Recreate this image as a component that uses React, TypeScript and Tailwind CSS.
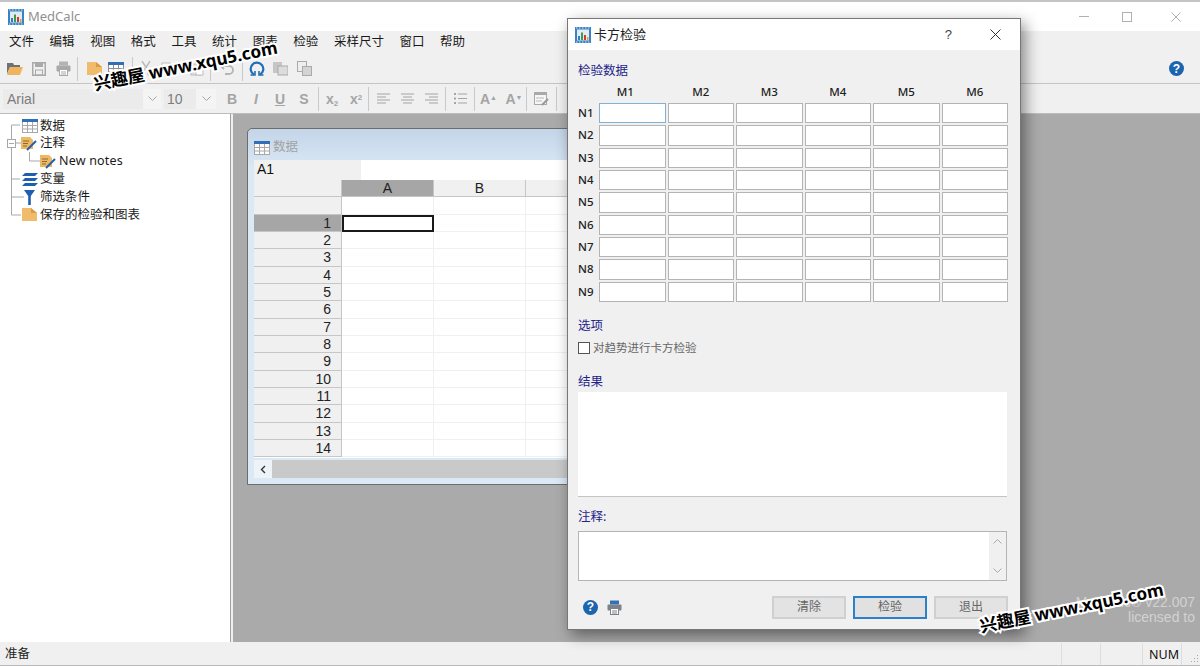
import React from "react";

const CJK = "font-['Liberation_Sans','Noto_Sans_CJK_SC',sans-serif]";
const UI = "font-['Noto_Sans','Noto_Sans_CJK_SC',sans-serif]";

function AppIcon({ size = 16 }: { size?: number }) {
  return (
    <svg width={size} height={size} viewBox="0 0 16 16" className="shrink-0">
      <rect x="0" y="0" width="16" height="16" fill="#3b82c4" />
      <path d="M1 1H15M1 15H15" stroke="#cfe2f3" strokeDasharray="1.5 1.5" />
      <rect x="2" y="2.5" width="12" height="11" fill="#dfeaf5" />
      <rect x="3" y="9" width="2" height="4" fill="#2b7fc9" />
      <rect x="6" y="5.5" width="2" height="7.5" fill="#3f9a45" />
      <rect x="9" y="8" width="2" height="5" fill="#d23a2c" />
      <rect x="12" y="10" width="1.5" height="3" fill="#e0a030" />
    </svg>
  );
}

function TableIcon({ muted = false, w = 16, h = 14 }: { muted?: boolean; w?: number; h?: number }) {
  const s = muted ? "#a8a8a8" : "#8d8d8d";
  return (
    <svg width={w} height={h} viewBox="0 0 16 14" className="shrink-0">
      <rect x="0.5" y="0.5" width="15" height="13" fill="#fff" stroke={s} />
      <rect x="0" y="0" width="16" height="3" fill="#2f6fb5" />
      <path d="M0 6.5H16M0 10H16M5.5 3V14M10.5 3V14" stroke={s} strokeWidth="1" />
    </svg>
  );
}

function NoteIcon() {
  return (
    <svg width="17" height="15" viewBox="0 0 17 15" className="shrink-0">
      <path d="M0 1H9L12 4V13H0Z" fill="#eeb762" />
      <path d="M2 5H8M2 7.5H7M2 10H6" stroke="#8a6a3a" strokeWidth="1" />
      <path d="M6 14L15 5" stroke="#1f5fae" strokeWidth="2" />
    </svg>
  );
}

function FolderDoc({ w = 15, h = 15 }: { w?: number; h?: number }) {
  return (
    <svg width={w} height={h} viewBox="0 0 15 15" className="shrink-0">
      <path d="M0 1H9L15 6V14H0Z" fill="#f0bb6a" />
      <path d="M9 1V6H15Z" fill="#d99c45" />
    </svg>
  );
}

function HelpIcon({ size = 15 }: { size?: number }) {
  return (
    <span
      style={{ width: size, height: size }}
      className="flex shrink-0 items-center justify-center rounded-full bg-[#1c64ad] font-['Liberation_Sans',sans-serif] text-[12px] leading-none font-bold text-white"
    >
      ?
    </span>
  );
}

function PrinterIcon({ c = "#8a8f94", top = "#b3b3b3" }: { c?: string; top?: string }) {
  return (
    <svg width="15" height="15" viewBox="0 0 15 15" className="shrink-0">
      <rect x="3" y="0.5" width="9" height="4" fill={top} />
      <rect x="0.5" y="4.5" width="14" height="6" rx="1" fill={c} />
      <rect x="3.5" y="8.5" width="8" height="6" fill="#fff" stroke={c} />
      <path d="M5 11H10M5 13H10" stroke={c} />
    </svg>
  );
}

const Tb = ({ w, children }: { w: number; children?: React.ReactNode }) => (
  <div style={{ width: w }} className="flex h-full shrink-0 items-center justify-center">
    {children}
  </div>
);
const Sep = () => <div className="mx-0 h-[24px] w-px shrink-0 bg-[#c9c9c9]" />;

const G = "#a9a9a9";

function Toolbar1() {
  return (
    <div className="flex h-[30px] items-center border-b border-[#c4c4c4] bg-[#f0f0f0] pl-[3px]">
      <Tb w={24}>
        <svg width="16" height="13" viewBox="0 0 16 13">
          <path d="M0 1H6L7 3H13V5H3L0 12Z" fill="#6f7275" />
          <path d="M3 5H16L13 13H0Z" fill="#efb45d" />
        </svg>
      </Tb>
      <Tb w={24}>
        <svg width="14" height="14" viewBox="0 0 14 14">
          <rect x="0.75" y="0.75" width="12.5" height="12.5" fill="none" stroke={G} strokeWidth="1.5" />
          <rect x="3" y="1" width="8" height="4" fill={G} />
          <rect x="3.5" y="8" width="7" height="5" fill="none" stroke={G} />
        </svg>
      </Tb>
      <Tb w={24}>
        <PrinterIcon c="#a9a9a9" />
      </Tb>
      <Tb w={2} />
      <Sep />
      <Tb w={5} />
      <Tb w={22}>
        <FolderDoc />
      </Tb>
      <Tb w={22}>
        <TableIcon />
      </Tb>
      <Tb w={5} />
      <Sep />
      <Tb w={2} />
      <Tb w={22}>
        <svg width="12" height="15" viewBox="0 0 12 15" fill="none" stroke="#b9b9b9" strokeWidth="1.4">
          <path d="M2 0L9 11M10 0L3 11" />
          <circle cx="2.5" cy="12.5" r="1.7" />
          <circle cx="9.5" cy="12.5" r="1.7" />
        </svg>
      </Tb>
      <Tb w={22}>
        <svg width="14" height="14" viewBox="0 0 14 14" fill="#fff" stroke="#bdbdbd">
          <rect x="1" y="1" width="8" height="9" />
          <rect x="5" y="4" width="8" height="9" />
        </svg>
      </Tb>
      <Tb w={5} />
      <Tb w={26}>
        <svg width="14" height="14" viewBox="0 0 14 14" fill="#ddd" stroke="#bdbdbd">
          <rect x="1" y="2" width="10" height="11" />
          <rect x="6" y="6" width="7" height="7" fill="#fff" />
        </svg>
      </Tb>
      <Sep />
      <Tb w={31}>
        <svg width="15" height="12" viewBox="0 0 15 12" fill="none" stroke="#b5b5b5" strokeWidth="1.8">
          <path d="M2 3H10A3.5 3.5 0 0 1 10 11H6" />
          <path d="M5 0L2 3L5 6" />
        </svg>
      </Tb>
      <Sep />
      <Tb w={28}>
        <svg width="16" height="16" viewBox="0 0 16 16" fill="none" stroke="#1f6fb8" strokeWidth="2.2">
          <path d="M5 13.5A6.3 6.3 0 1 1 11 13.5" />
          <path d="M1.5 14H6V10M14.5 14H10V10" strokeWidth="1.6" />
        </svg>
      </Tb>
      <Tb w={19}>
        <svg width="15" height="15" viewBox="0 0 15 15">
          <rect x="0" y="1" width="9" height="11" fill="#c6c6c6" />
          <rect x="5" y="5" width="10" height="9" fill="#dcdcdc" stroke="#aaa" />
        </svg>
      </Tb>
      <Tb w={28}>
        <svg width="15" height="15" viewBox="0 0 15 15">
          <rect x="0.5" y="0.5" width="9" height="10" fill="#eee" stroke="#aaa" />
          <rect x="5.5" y="5.5" width="9" height="9" fill="#d4d4d4" stroke="#aaa" />
        </svg>
      </Tb>
      <div className="mr-[16px] ml-auto">
        <HelpIcon />
      </div>
    </div>
  );
}

const Fmt = ({ w = 24, children }: { w?: number; children: React.ReactNode }) => (
  <Tb w={w}>
    <span className="font-['Liberation_Sans',sans-serif] text-[14px] leading-none font-bold text-[#a4a4a4]">
      {children}
    </span>
  </Tb>
);

const Lines = ({ kind }: { kind: "l" | "c" | "r" }) => {
  const d =
    kind === "l"
      ? "M0 1H13M0 4H9M0 7H13M0 10H9"
      : kind === "c"
        ? "M0 1H13M2 4H11M0 7H13M2 10H11"
        : "M0 1H13M4 4H13M0 7H13M4 10H13";
  return (
    <svg width="13" height="11" viewBox="0 0 13 11" fill="none" stroke="#a4a4a4">
      <path d={d} />
    </svg>
  );
};

function Combo({ w, label, dw, pad }: { w: number; label: string; dw: number; pad: string }) {
  return (
    <div style={{ width: w }} className="flex h-[20px] shrink-0 bg-[#ebebeb]">
      <div className={`flex-1 font-['Liberation_Sans',sans-serif] text-[14px] leading-[20px] text-[#7d7d7d] ${pad}`}>
        {label}
      </div>
      <div style={{ width: dw }} className="flex items-center justify-center bg-[#f4f4f4]">
        <svg width="9" height="5" viewBox="0 0 9 5" fill="none" stroke="#a5a5a5">
          <path d="M0.5 0.5L4.5 4.5L8.5 0.5" />
        </svg>
      </div>
    </div>
  );
}

function Toolbar2() {
  return (
    <div className="flex h-[30px] items-center border-b border-[#bdbdbd] bg-[#f0f0f0] pl-[3px]">
      <Combo w={158} label="Arial" dw={18} pad="pl-[4px]" />
      <div className="w-[3px]" />
      <Combo w={52} label="10" dw={20} pad="pl-[3px]" />
      <Tb w={4} />
      <Fmt>B</Fmt>
      <Fmt>
        <i>I</i>
      </Fmt>
      <Fmt>
        <u>U</u>
      </Fmt>
      <Fmt>S</Fmt>
      <Tb w={2} />
      <Sep />
      <Tb w={1} />
      <Fmt>
        x<sub className="text-[8px]">2</sub>
      </Fmt>
      <Fmt>
        x<sup className="text-[8px]">2</sup>
      </Fmt>
      <Sep />
      <Tb w={2} />
      <Tb w={24}>
        <Lines kind="l" />
      </Tb>
      <Tb w={24}>
        <Lines kind="c" />
      </Tb>
      <Tb w={24}>
        <Lines kind="r" />
      </Tb>
      <Tb w={2} />
      <Sep />
      <Tb w={28}>
        <svg width="13" height="11" viewBox="0 0 13 11" fill="none" stroke="#a4a4a4">
          <path d="M4 1H13M4 5.5H13M4 10H13" />
          <path d="M0 1H2M0 5.5H2M0 10H2" strokeWidth="2" />
        </svg>
      </Tb>
      <Sep />
      <Fmt w={27}>
        A<sup className="text-[7px]">▲</sup>
      </Fmt>
      <Fmt w={24}>
        A<sup className="text-[7px]">▼</sup>
      </Fmt>
      <Sep />
      <Tb w={29}>
        <svg width="15" height="14" viewBox="0 0 15 14">
          <rect x="0.5" y="0.5" width="12" height="12" fill="#f6f6f6" stroke="#a9a9a9" />
          <rect x="0" y="0" width="13" height="3" fill="#a9a9a9" />
          <path d="M2 6H10M2 9H8" stroke="#bbb" />
          <path d="M8 13L14 7" stroke="#999" strokeWidth="2" />
        </svg>
      </Tb>
      <Sep />
    </div>
  );
}

const TreeRow = ({ icon, text, indent = 21, latin = false }: { icon: React.ReactNode; text: string; indent?: number; latin?: boolean }) => (
  <div style={{ paddingLeft: indent }} className="relative flex h-[17.8px] items-center gap-[2px]">
    <div className="flex w-[17px] shrink-0 items-center justify-center">{icon}</div>
    <span className={`${UI} text-[12.5px] leading-none text-[#1a1a1a] ${latin ? "tracking-[0.2px]" : ""}`}>{text}</span>
  </div>
);

function Tree() {
  return (
    <div className="relative w-[231px] shrink-0 border-r border-[#a0a0a0] bg-white pt-[3px]">
      <svg width="40" height="110" className="absolute top-0 left-0" fill="none" stroke="#a8a8a8">
        <path d="M11.5 11V101M11.5 11H20M16 29H21M29.5 38V47H40M11.5 65H20M11.5 83H24M11.5 101H21" />
        <rect x="7.5" y="25.5" width="8" height="8" fill="#fff" />
        <path d="M9 29.5H14" />
      </svg>
      <TreeRow icon={<TableIcon muted />} text="数据" />
      <TreeRow icon={<NoteIcon />} text="注释" />
      <TreeRow indent={40} icon={<NoteIcon />} text="New notes" latin />
      <TreeRow
        icon={
          <svg width="16" height="13" viewBox="0 0 16 13" fill="#1f5fae">
            <path d="M3 0H16L13 3H0Z" />
            <path d="M3 5H16L13 8H0Z" />
            <path d="M3 10H16L13 13H0Z" />
          </svg>
        }
        text="变量"
      />
      <TreeRow
        icon={
          <svg width="11" height="15" viewBox="0 0 11 15">
            <path d="M0 0H11L6.8 6V15H4.2V6Z" fill="#1f5fae" />
          </svg>
        }
        text="筛选条件"
      />
      <TreeRow icon={<FolderDoc />} text="保存的检验和图表" />
    </div>
  );
}

const hCell = "border-r border-b border-[#c6c6c6] bg-[#f0f0f0]";

function DataWindow() {
  const rows = Array.from({ length: 14 }, (_, i) => i + 1);
  return (
    <div className="absolute top-[14px] left-[14px] flex h-[357px] w-[440px] flex-col rounded-t-[5px] border border-[#6d6d6d] bg-gradient-to-b from-[#c3d5e8] to-[#dbe8f5] to-[40px] px-[6px]">
      <div className="flex h-[31px] shrink-0 items-center gap-[3px] pt-[6px]">
        <TableIcon muted />
        <span className={`${UI} text-[12.5px] text-[#a2a2a2]`}>数据</span>
      </div>
      <div className="flex h-[20px] shrink-0 bg-white">
        <div className="w-[107px] bg-[#f0f0f0] pl-[3px] font-['Liberation_Sans',sans-serif] text-[14px] leading-[19px] text-[#111]">A1</div>
      </div>
      <div className="grid h-[278px] shrink-0 auto-rows-[17.33px] grid-cols-[88px_92px_92px_92px] overflow-hidden bg-white font-['Liberation_Sans',sans-serif] text-[14px] leading-[17px] text-[#222]">
        <div className={hCell} />
        <div className="border-r border-b border-[#c6c6c6] bg-[#a6a6a6] text-center">A</div>
        <div className={`${hCell} text-center`}>B</div>
        <div className={hCell} />
        <div className={hCell} />
        <div className="border-r border-b border-[#f0f0f0]" />
        <div className="border-r border-b border-[#f0f0f0]" />
        <div className="border-r border-b border-[#f0f0f0]" />
        {rows.map((r) => (
          <React.Fragment key={r}>
            <div className={`${r === 1 ? "border-r border-b border-[#c6c6c6] bg-[#a6a6a6]" : hCell} pr-[10px] text-right`}>{r}</div>
            <div className={r === 1 ? "border-2 border-[#1a1a1a]" : "border-r border-b border-[#f0f0f0]"} />
            <div className="border-r border-b border-[#f0f0f0]" />
            <div className="border-r border-b border-[#f0f0f0]" />
          </React.Fragment>
        ))}
      </div>
      <div className="mt-[2px] flex h-[18px] shrink-0">
        <div className="flex w-[18px] items-center justify-center bg-[#eef3f8]">
          <svg width="6" height="9" viewBox="0 0 6 9" fill="none" stroke="#333" strokeWidth="1.4">
            <path d="M5 1L1.5 4.5L5 8" />
          </svg>
        </div>
        <div className="flex-1 bg-[#c9c9c9]" />
      </div>
    </div>
  );
}

const Heading = ({ children, className = "" }: { children: React.ReactNode; className?: string }) => (
  <div className={`${UI} text-[12.5px] leading-[16px] text-[#23238a] ${className}`}>{children}</div>
);

const DlgBtn = ({ label, primary = false }: { label: string; primary?: boolean }) => (
  <div
    className={`flex h-[23px] w-[74px] items-center justify-center border-2 text-[12px] text-[#666] ${CJK} ${
      primary ? "border-[#2c7fc9] bg-[#e1e1e1]" : "border-[#d0d0d0] bg-[#e3e3e3]"
    }`}
  >
    {label}
  </div>
);

function Dialog() {
  const ms = ["M1", "M2", "M3", "M4", "M5", "M6"];
  const ns = ["N1", "N2", "N3", "N4", "N5", "N6", "N7", "N8", "N9"];
  return (
    <div className="absolute top-[18px] left-[567px] z-10 flex h-[612px] w-[454px] flex-col border border-[#777] bg-[#f0f0f0] shadow-[4px_5px_14px_rgba(0,0,0,0.45)]">
      <div className="flex h-[31px] shrink-0 items-center bg-white pl-[7px]">
        <AppIcon />
        <span className={`${UI} ml-[3px] text-[13px] text-[#222]`}>卡方检验</span>
        <span className="ml-auto font-['Liberation_Sans',sans-serif] text-[13px] text-[#444]">?</span>
        <svg width="11" height="11" viewBox="0 0 11 11" className="mr-[19px] ml-[38px]" fill="none" stroke="#333">
          <path d="M0.5 0.5L10.5 10.5M10.5 0.5L0.5 10.5" />
        </svg>
      </div>
      <div className="flex w-[450px] flex-1 flex-col pl-[10px]">
        <Heading className="mt-[13px]">检验数据</Heading>
        <div className="mt-[6px] grid grid-cols-[19px_repeat(6,66.5px)] grid-rows-[16px_repeat(9,20.33px)] gap-x-[2px] gap-y-[2px]">
          <div />
          {ms.map((m, i) => (
            <div key={m} className={`text-center font-['Noto_Sans',sans-serif] text-[11.5px] leading-[14px] font-medium text-[#222] ${i === 0 ? "pr-[14px]" : ""}`}>
              {m}
            </div>
          ))}
          {ns.map((n, r) => (
            <React.Fragment key={n}>
              <div className="font-['Noto_Sans',sans-serif] text-[11.5px] leading-[20px] font-medium text-[#222]">{n}</div>
              {ms.map((m, c) => (
                <div key={m} className={`border bg-white ${r === 0 && c === 0 ? "border-[#7fb2d6]" : "border-[#b4b4b4]"}`} />
              ))}
            </React.Fragment>
          ))}
        </div>
        <Heading className="mt-[16px]">选项</Heading>
        <div className="mt-[8px] flex h-[13px] items-center gap-[3px]">
          <div className="h-[12px] w-[12px] border border-[#555] bg-white" />
          <span className={`${CJK} text-[11.5px] text-[#666]`}>对趋势进行卡方检验</span>
        </div>
        <Heading className="mt-[19px]">结果</Heading>
        <div className="mt-[2px] h-[105px] w-[429px] border-b border-[#c4c4c4] bg-white" />
        <Heading className="mt-[12px]">注释:</Heading>
        <div className="mt-[6px] flex h-[50px] w-[429px] border border-[#b4b4b4] bg-white">
          <div className="flex-1" />
          <div className="flex w-[17px] flex-col items-center justify-between bg-[#f0f0f0] py-[7px]">
            <svg width="9" height="5" viewBox="0 0 9 5" fill="none" stroke="#aaa">
              <path d="M0.5 4.5L4.5 0.5L8.5 4.5" />
            </svg>
            <svg width="9" height="5" viewBox="0 0 9 5" fill="none" stroke="#aaa">
              <path d="M0.5 0.5L4.5 4.5L8.5 0.5" />
            </svg>
          </div>
        </div>
        <div className="mt-[15px] flex w-[430px] items-center">
          <div className="ml-[5px]">
            <HelpIcon />
          </div>
          <div className="ml-[9px]">
            <PrinterIcon c="#7b8289" top="#2f72b8" />
          </div>
          <div className="ml-auto flex gap-[7px]">
            <DlgBtn label="清除" />
            <DlgBtn label="检验" primary />
            <DlgBtn label="退出" />
          </div>
        </div>
      </div>
    </div>
  );
}

const Watermark = ({ className }: { className: string }) => (
  <div
    className={`absolute z-20 -rotate-[11.5deg] font-['Noto_Sans','Noto_Sans_CJK_SC',sans-serif] text-[17.2px] leading-none font-bold whitespace-nowrap text-black [-webkit-text-stroke:4px_white] [paint-order:stroke_fill] ${className}`}
  >
    兴趣屋 www.xqu5.com
  </div>
);

export default function App() {
  const menus = ["文件", "编辑", "视图", "格式", "工具", "统计", "图表", "检验", "采样尺寸", "窗口", "帮助"];
  return (
    <div className="relative flex h-[666px] w-[1200px] flex-col overflow-hidden bg-white">
      <div className="flex h-[31px] shrink-0 items-center border-t-2 border-[#c4c4c4] bg-white pl-[8px]">
        <AppIcon />
        <span className="ml-[4px] font-['Noto_Sans',sans-serif] text-[13px] text-[#909090]">MedCalc</span>
        <div className="ml-auto flex items-center">
          <div className="h-px w-[10px] bg-[#b0b0b0]" />
          <div className="ml-[33px] h-[10px] w-[10px] border border-[#b0b0b0]" />
          <svg width="10" height="10" viewBox="0 0 10 10" className="mr-[19px] ml-[39px]" fill="none" stroke="#b0b0b0">
            <path d="M0.5 0.5L9.5 9.5M9.5 0.5L0.5 9.5" />
          </svg>
        </div>
      </div>
      <div className={`${UI} flex h-[23px] shrink-0 items-center gap-[15.6px] bg-[#f0f0f0] pl-[9px] text-[12.5px] text-[#1a1a1a]`}>
        {menus.map((m) => (
          <span key={m}>{m}</span>
        ))}
      </div>
      <Toolbar1 />
      <Toolbar2 />
      <div className="flex min-h-0 flex-1">
        <Tree />
        <div className="w-[2px] shrink-0 bg-[#f0f0f0]" />
        <div className="relative flex-1 overflow-hidden bg-[#aaaaaa]">
          <DataWindow />
          <div className="absolute right-[5px] bottom-[17px] text-right font-['Liberation_Sans',sans-serif] text-[14px] leading-[15px] text-[#d2d2d2]">
            MedCalc® v22.007
            <br />
            licensed to
          </div>
        </div>
      </div>
      <div className="flex h-[24px] shrink-0 items-center border-b border-[#bbb] bg-[#f0f0f0] pt-[1px] pl-[5px]">
        <span className={`${UI} text-[12.5px] text-[#222]`}>准备</span>
        <div className="ml-auto flex h-full">
          <div className="w-[39px] border-l border-[#ddd]" />
          <div className="w-[42px] border-l border-[#ddd]" />
          <div className="w-[39px] border-l border-[#ddd] pl-[6px] font-['Noto_Sans',sans-serif] text-[12.5px] leading-[24px] text-[#111]">NUM</div>
          <div className="flex w-[19px] items-end justify-end border-l border-[#ddd] pr-[1px] pb-[2px]">
            <svg width="9" height="9" viewBox="0 0 9 9" fill="#a8a8a8">
              <path d="M7 1H8V2H7ZM4 4H5V5H4ZM7 4H8V5H7ZM1 7H2V8H1ZM4 7H5V8H4ZM7 7H8V8H7Z" />
            </svg>
          </div>
        </div>
      </div>
      <Dialog />
      <Watermark className="top-[57px] left-[92px]" />
      <Watermark className="top-[599px] left-[978px]" />
    </div>
  );
}
